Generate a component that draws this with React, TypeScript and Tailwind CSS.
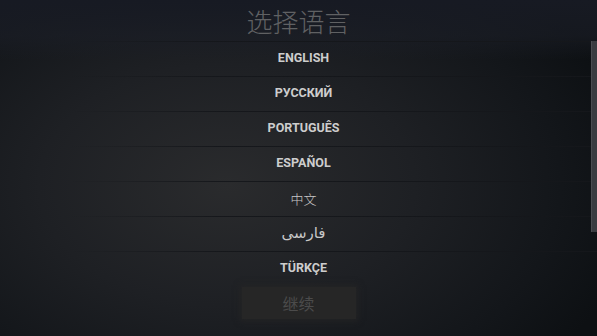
import React from "react";

const langs = [
  { t: "ENGLISH", k: "latin" },
  { t: "РУССКИЙ", k: "latin" },
  { t: "PORTUGUÊS", k: "latin" },
  { t: "ESPAÑOL", k: "latin" },
  { t: "中文", k: "cjk" },
  { t: "فارسی", k: "fa" },
  { t: "TÜRKÇE", k: "latin" },
];

export default function App() {
  return (
    <div className="relative w-[597px] h-[336px] overflow-hidden bg-[radial-gradient(ellipse_70%_80%_at_38%_55%,#2a2b2d_0%,#1e2024_45%,#13161a_80%,#0d1013_100%)]">
      <div className="absolute inset-x-0 top-0 h-[60px] bg-[linear-gradient(to_bottom,#171a23_0%,rgba(27,30,39,0.6)_60%,rgba(27,30,39,0)_100%)]" />
      <div className="relative flex flex-col items-center">
        <div
          className="h-[41px] flex items-center justify-center text-[26px] leading-none text-[#606163]"
          style={{ fontFamily: '"Noto Sans CJK SC", "Noto Sans", sans-serif', fontWeight: 300 }}
        >
          选择语言
        </div>
        <div className="w-full flex flex-col pl-[10px]">
          {langs.map((l, i) => (
            <div key={i} className="relative h-[35px] flex items-center justify-center">
              <div className="absolute left-0 right-0 top-0 h-px bg-[linear-gradient(to_right,rgba(20,22,26,0)_10%,rgba(20,22,26,0.9)_35%,#15171b_100%)]" />
              {l.k === "latin" && (
                <span
                  className="text-[12.5px] font-bold text-[#cdcdcd]"
                  style={{ fontFamily: 'Roboto, "Liberation Sans", sans-serif' }}
                >
                  {l.t}
                </span>
              )}
              {l.k === "cjk" && (
                <span
                  className="text-[13px] text-[#c8c8c8]"
                  style={{ fontFamily: '"Noto Sans CJK SC", sans-serif', fontWeight: 300 }}
                >
                  {l.t}
                </span>
              )}
              {l.k === "fa" && (
                <span
                  className="text-[15px] text-[#c8c8c8]"
                  style={{ fontFamily: '"DejaVu Sans", "Noto Sans", sans-serif' }}
                >
                  {l.t}
                </span>
              )}
            </div>
          ))}
        </div>
        <div className="mt-[1px] w-[114px] h-[32px] flex items-center justify-center bg-[#262626] shadow-[0_0_6px_2px_rgba(38,38,38,0.8)]">
          <span
            className="text-[16px] text-[#4b4b4b]"
            style={{ fontFamily: '"Noto Sans CJK SC", sans-serif' }}
          >
            继续
          </span>
        </div>
      </div>
      <div className="absolute right-0 top-[41px] w-[6px] h-[191px] bg-[#3a3c41] border-l border-[#4a4c51]" />
    </div>
  );
}
